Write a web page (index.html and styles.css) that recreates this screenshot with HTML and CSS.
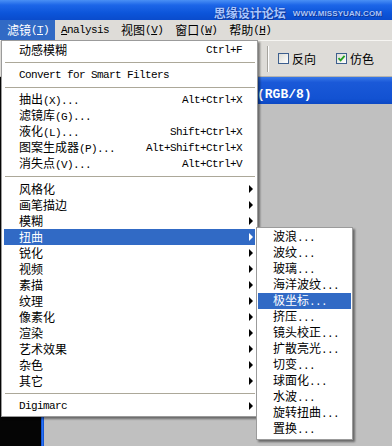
FILE: index.html
```html
<!DOCTYPE html>
<html>
<head>
<meta charset="utf-8">
<link rel="stylesheet" href="styles.css">
</head>
<body>
<div class="screen">
  <div class="titlebar">
    <span class="wm-cn">思缘设计论坛</span>
    <span class="wm-en">WWW.MISSYUAN.COM</span>
  </div>
  <div class="menubar">
    <div class="mb-item active">滤镜<span class="m">(<u>T</u>)</span></div>
    <div class="mb-item"><span class="m"><u>A</u>nalysis</span></div>
    <div class="mb-item">视图<span class="m">(<u>V</u>)</span></div>
    <div class="mb-item">窗口<span class="m">(<u>W</u>)</span></div>
    <div class="mb-item">帮助<span class="m">(<u>H</u>)</span></div>
  </div>
  <div class="toolbar">
    <div class="tb-sep"></div>
    <div class="chk"><span class="box"></span>反向</div>
    <div class="chk"><span class="box"><svg width="9" height="9" viewBox="0 0 9 9"><path d="M1.5 4.2 L3.6 6.4 L7.6 1.8" fill="none" stroke="#21a121" stroke-width="1.8"/></svg></span>仿色</div>
  </div>
  <div class="workspace">
    <div class="dark"></div>
    <div class="frame"></div>
    <div class="doc">
      <div class="doc-title"><span class="doc-name">(RGB/8)</span></div>
      <div class="canvas"></div>
    </div>
  </div>

  <div class="menu main">
    <div class="item"><span class="label">动感模糊</span><span class="key m">Ctrl+F</span></div>
    <div class="sep"></div>
    <div class="item"><span class="label m">Convert for Smart Filters</span></div>
    <div class="sep"></div>
    <div class="item"><span class="label">抽出<span class="m">(X)...</span></span><span class="key m">Alt+Ctrl+X</span></div>
    <div class="item"><span class="label">滤镜库<span class="m">(G)...</span></span></div>
    <div class="item"><span class="label">液化<span class="m">(L)...</span></span><span class="key m">Shift+Ctrl+X</span></div>
    <div class="item"><span class="label">图案生成器<span class="m">(P)...</span></span><span class="key m">Alt+Shift+Ctrl+X</span></div>
    <div class="item"><span class="label">消失点<span class="m">(V)...</span></span><span class="key m">Alt+Ctrl+V</span></div>
    <div class="sep"></div>
    <div class="item"><span class="label">风格化</span><span class="arrow"></span></div>
    <div class="item"><span class="label">画笔描边</span><span class="arrow"></span></div>
    <div class="item"><span class="label">模糊</span><span class="arrow"></span></div>
    <div class="item hl"><span class="label">扭曲</span><span class="arrow"></span></div>
    <div class="item"><span class="label">锐化</span><span class="arrow"></span></div>
    <div class="item"><span class="label">视频</span><span class="arrow"></span></div>
    <div class="item"><span class="label">素描</span><span class="arrow"></span></div>
    <div class="item"><span class="label">纹理</span><span class="arrow"></span></div>
    <div class="item"><span class="label">像素化</span><span class="arrow"></span></div>
    <div class="item"><span class="label">渲染</span><span class="arrow"></span></div>
    <div class="item"><span class="label">艺术效果</span><span class="arrow"></span></div>
    <div class="item"><span class="label">杂色</span><span class="arrow"></span></div>
    <div class="item"><span class="label">其它</span><span class="arrow"></span></div>
    <div class="sep"></div>
    <div class="item"><span class="label m">Digimarc</span><span class="arrow"></span></div>
  </div>

  <div class="menu sub">
    <div class="item"><span class="label">波浪<span class="m">...</span></span></div>
    <div class="item"><span class="label">波纹<span class="m">...</span></span></div>
    <div class="item"><span class="label">玻璃<span class="m">...</span></span></div>
    <div class="item"><span class="label">海洋波纹<span class="m">...</span></span></div>
    <div class="item hl"><span class="label">极坐标<span class="m">...</span></span></div>
    <div class="item"><span class="label">挤压<span class="m">...</span></span></div>
    <div class="item"><span class="label">镜头校正<span class="m">...</span></span></div>
    <div class="item"><span class="label">扩散亮光<span class="m">...</span></span></div>
    <div class="item"><span class="label">切变<span class="m">...</span></span></div>
    <div class="item"><span class="label">球面化<span class="m">...</span></span></div>
    <div class="item"><span class="label">水波<span class="m">...</span></span></div>
    <div class="item"><span class="label">旋转扭曲<span class="m">...</span></span></div>
    <div class="item"><span class="label">置换<span class="m">...</span></span></div>
  </div>
</div>
</body>
</html>
```

FILE: styles.css
```css
html, body {
  margin: 0;
  padding: 0;
  background: #c0c0c0;
}
.screen {
  position: relative;
  width: 392px;
  height: 446px;
  overflow: hidden;
  font-family: "Noto Sans CJK SC", "Liberation Sans", sans-serif;
  font-size: 12px;
  color: #000;
  display: flex;
  flex-direction: column;
}
.m {
  font-family: "Liberation Mono", "Noto Sans CJK SC", monospace;
  font-size: 11px;
  letter-spacing: -0.6px;
}

/* title bar */
.titlebar {
  height: 20px;
  flex: none;
  background: linear-gradient(to bottom, #4a90f5 0%, #1d66e8 25%, #0c55da 65%, #0a4bcc 100%);
  display: flex;
  align-items: flex-end;
  justify-content: flex-end;
  padding-right: 10px;
  gap: 7px;
  box-sizing: border-box;
}
.wm-cn {
  font-size: 12px;
  line-height: 15px;
  font-weight: 700;
  color: #a9c6ff;
  text-shadow: 0 0 1px #0a2f8a, 1px 1px 0 #123a9a;
}
.wm-en {
  font-family: "Liberation Sans", sans-serif;
  font-size: 8px;
  line-height: 13px;
  font-weight: 700;
  color: #a9c6ff;
  text-shadow: 0 0 1px #0a2f8a, 1px 1px 0 #123a9a;
  letter-spacing: 0.1px;
}

/* menu bar */
.menubar {
  height: 20px;
  flex: none;
  background: #dedcd8;
  display: flex;
  align-items: stretch;
}
.mb-item {
  padding: 0 6px;
  line-height: 20px;
  display: flex;
  align-items: center;
}
.mb-item:first-child {
  padding-left: 7px;
}
.mb-item.active {
  background: #316ac5;
  color: #fff;
}

/* toolbar */
.toolbar {
  height: 37px;
  flex: none;
  box-sizing: border-box;
  background: #dedcd8;
  border-top: 1px solid #f6f5f2;
  border-bottom: 1px solid #b6b4ae;
  display: flex;
  align-items: center;
  padding-left: 267px;
  white-space: nowrap;
}
.tb-sep {
  flex: none;
  width: 1px;
  height: 26px;
  background: #a6a49e;
  border-right: 1px solid #fff;
  margin-right: 9px;
}
.chk {
  flex: none;
  display: flex;
  align-items: center;
  gap: 3px;
  margin-right: 20px;
  font-size: 12px;
}
.chk:last-child {
  margin-right: 0;
}
.box {
  flex: none;
  width: 9px;
  height: 9px;
  border: 1px solid #3d5f8e;
  background: linear-gradient(135deg, #dcdcd6, #fff);
  display: flex;
  align-items: center;
  justify-content: center;
}

/* workspace */
.workspace {
  flex: 1;
  display: flex;
}
.dark {
  width: 41px;
  background: #050505;
}
.frame {
  width: 3px;
  background: linear-gradient(to right, #0a46c8, #2a74f4, #0a46c8);
}
.doc {
  flex: 1;
  display: flex;
  flex-direction: column;
}
.doc-title {
  height: 27px;
  background: linear-gradient(to bottom, #3878e8 0%, #1a59d8 20%, #1252d2 80%, #0c48c4 100%);
  display: flex;
  align-items: center;
  padding-left: 213px;
  padding-top: 8px;
  box-sizing: border-box;
}
.doc-name {
  font-family: "Liberation Mono", monospace;
  font-weight: 700;
  font-size: 13px;
  color: #fff;
}
.canvas {
  flex: 1;
  background: #c0c0c0;
}

/* menus */
.menu {
  position: absolute;
  background: #fff;
  border: 1px solid #9b9b9b;
  box-sizing: border-box;
  box-shadow: 2px 2px 2px rgba(0, 0, 0, 0.45);
}
.menu.main {
  left: 1px;
  top: 40px;
  width: 257px;
  padding: 1px 2px 2px 2px;
}
.menu.sub {
  left: 256px;
  top: 227px;
  width: 97px;
  padding: 1px 1px 2px 1px;
}
.item {
  height: 16px;
  line-height: 16px;
  display: flex;
  align-items: center;
  padding: 0 2px 0 15px;
  white-space: nowrap;
}
.label {
  flex: 1;
}
.key {
  margin-right: 11px;
}
.arrow {
  width: 0;
  height: 0;
  border-top: 4px solid transparent;
  border-bottom: 4px solid transparent;
  border-left: 4px solid #000;
}
.item.hl {
  background: #316ac5;
  color: #fff;
}
.item.hl .arrow {
  border-left-color: #fff;
}
.sep {
  height: 9px;
  display: flex;
  align-items: center;
}
.sep::before {
  content: "";
  flex: 1;
  height: 1px;
  margin: 0 0 0 1px;
  background: #aca899;
}
```
